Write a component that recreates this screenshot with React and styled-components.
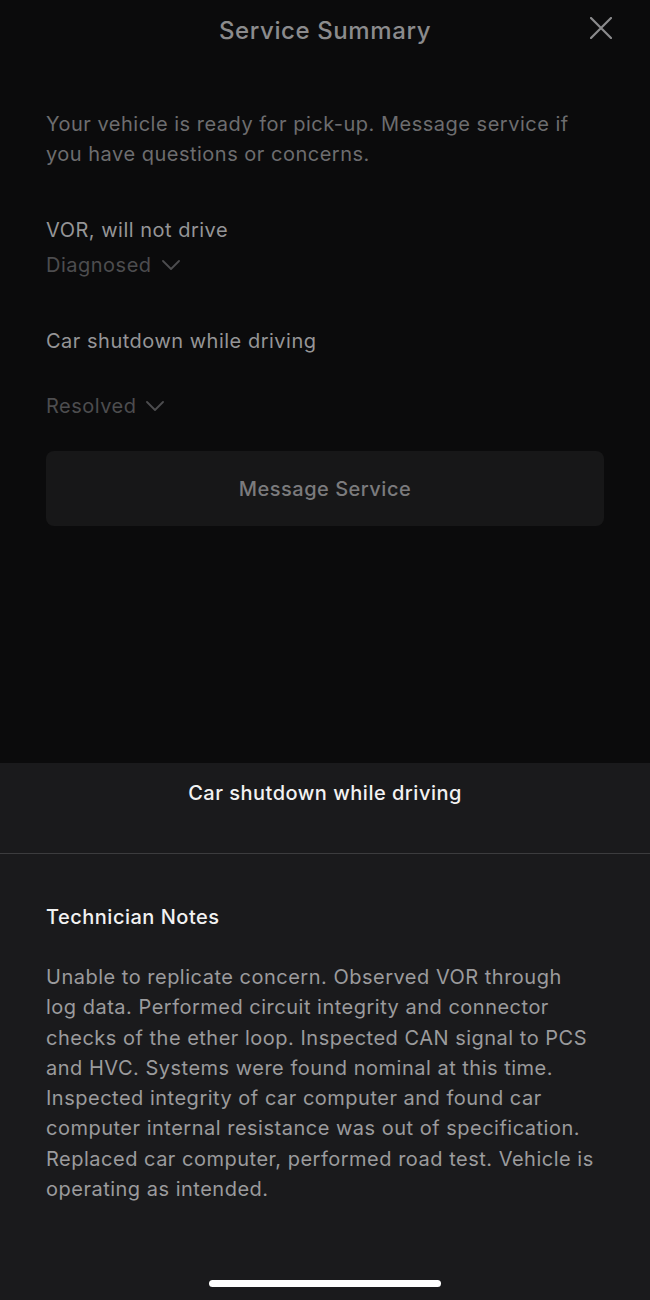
import styled, { createGlobalStyle } from 'styled-components'

const Global = createGlobalStyle`
  html, body {
    margin: 0;
    padding: 0;
    background: #0b0b0c;
  }
  * {
    box-sizing: border-box;
  }
`

const Screen = styled.div`
  width: 650px;
  height: 1300px;
  display: flex;
  flex-direction: column;
  background: #0b0b0c;
  font-family: Inter, 'Liberation Sans', sans-serif;
  letter-spacing: 0.5px;
  overflow: hidden;
`

const Summary = styled.div`
  flex: 1;
  padding: 0 46px;
  display: flex;
  flex-direction: column;
`

const Header = styled.header`
  position: relative;
  height: 60px;
  display: flex;
  align-items: center;
  justify-content: center;
`

const Title = styled.h1`
  margin: 0;
  font-size: 24px;
  font-weight: 500;
  letter-spacing: 0.6px;
  color: #8b8b8d;
`

const Close = styled.button`
  position: absolute;
  right: -11px;
  top: 14px;
  width: 28px;
  height: 28px;
  padding: 0;
  border: 0;
  background: none;
  display: flex;
  align-items: center;
  justify-content: center;
`

const Intro = styled.p`
  margin: 49px 0 0;
  font-size: 20px;
  line-height: 30px;
  color: #6d6d6f;
`

const Concern = styled.div`
  display: flex;
  flex-direction: column;
  margin-top: ${({ $top }) => $top}px;
`

const ConcernName = styled.div`
  font-size: 20px;
  line-height: 30px;
  color: #959597;
`

const Status = styled.div`
  display: flex;
  align-items: center;
  gap: 10px;
  margin-top: ${({ $gap }) => $gap}px;
  font-size: 20px;
  line-height: 30px;
  color: #4d4d4f;
`

const MessageButton = styled.button`
  margin-top: 30px;
  height: 75px;
  width: 100%;
  border: 0;
  border-radius: 8px;
  background: #171718;
  color: #7b7b7d;
  font-family: inherit;
  letter-spacing: inherit;
  font-size: 20px;
  font-weight: 500;
`

const Sheet = styled.section`
  height: 537px;
  background: #1a1a1c;
  display: flex;
  flex-direction: column;
`

const SheetHead = styled.div`
  height: 91px;
  border-bottom: 1px solid #3c3c3e;
  display: flex;
  justify-content: center;
  padding-top: 15px;
  font-size: 20px;
  line-height: 30px;
  font-weight: 500;
  color: #f2f2f2;
`

const Notes = styled.div`
  flex: 1;
  padding: 48px 46px 0;
  display: flex;
  flex-direction: column;
`

const NotesTitle = styled.h2`
  margin: 0;
  font-size: 20px;
  line-height: 30px;
  font-weight: 500;
  color: #f2f2f2;
`

const NotesBody = styled.p`
  margin: 30px 0 0;
  max-width: 552px;
  font-size: 20px;
  line-height: 30.3px;
  color: #9b9b9d;
`

const HomeBar = styled.div`
  margin: auto auto 13px;
  width: 232px;
  height: 7px;
  border-radius: 4px;
  background: #ffffff;
`

function Chevron() {
  return (
    <svg width="18" height="10" viewBox="0 0 18 10" fill="none">
      <path d="M1 1l8 8 8-8" stroke="#4d4d4f" strokeWidth="1.8" strokeLinecap="round" strokeLinejoin="round" />
    </svg>
  )
}

export default function App() {
  return (
    <>
      <Global />
      <Screen>
        <Summary>
          <Header>
            <Title>Service Summary</Title>
            <Close aria-label="Close">
              <svg width="22" height="22" viewBox="0 0 22 22" fill="none">
                <path d="M1 1l20 20M21 1L1 21" stroke="#8b8b8d" strokeWidth="2.2" strokeLinecap="round" />
              </svg>
            </Close>
          </Header>

          <Intro>
            Your vehicle is ready for pick-up. Message service if you have questions or concerns.
          </Intro>

          <Concern $top={46}>
            <ConcernName>VOR, will not drive</ConcernName>
            <Status $gap={5}>
              Diagnosed <Chevron />
            </Status>
          </Concern>

          <Concern $top={46}>
            <ConcernName>Car shutdown while driving</ConcernName>
            <Status $gap={35}>
              Resolved <Chevron />
            </Status>
          </Concern>

          <MessageButton>Message Service</MessageButton>
        </Summary>

        <Sheet>
          <SheetHead>Car shutdown while driving</SheetHead>
          <Notes>
            <NotesTitle>Technician Notes</NotesTitle>
            <NotesBody>
              Unable to replicate concern. Observed VOR through log data. Performed circuit integrity and
              connector checks of the ether loop. Inspected CAN signal to PCS and HVC. Systems were found
              nominal at this time. Inspected integrity of car computer and found car computer internal
              resistance was out of specification. Replaced car computer, performed road test. Vehicle is
              operating as intended.
            </NotesBody>
          </Notes>
          <HomeBar />
        </Sheet>
      </Screen>
    </>
  )
}
